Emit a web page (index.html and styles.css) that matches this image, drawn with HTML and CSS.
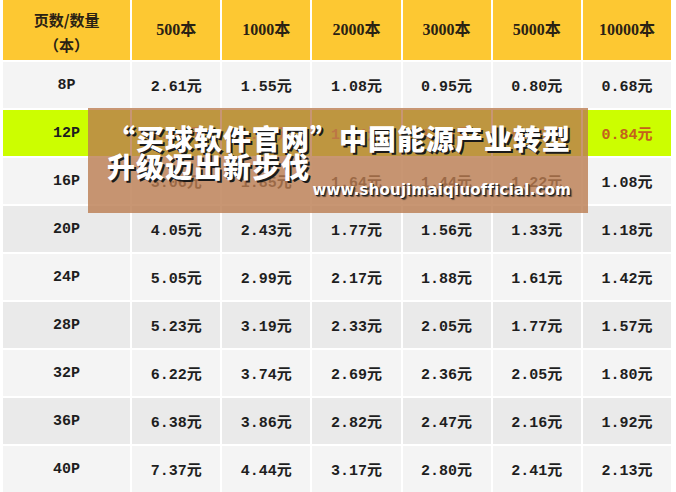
FILE: index.html
```html
<!DOCTYPE html>
<html lang="zh-CN">
<head>
<meta charset="utf-8">
<title>价格表</title>
<link rel="stylesheet" href="styles.css">
</head>
<body>
<div class="page">
  <table class="price">
    <colgroup>
      <col class="c-first">
      <col class="c-num"><col class="c-num"><col class="c-num">
      <col class="c-num"><col class="c-num"><col class="c-num">
    </colgroup>
    <thead>
      <tr>
        <th class="h-first">页数/数量<br>（本）</th>
        <th>500本</th><th>1000本</th><th>2000本</th><th>3000本</th><th>5000本</th><th>10000本</th>
      </tr>
    </thead>
    <tbody>
      <tr class="light"><td>8P</td><td>2.61元</td><td>1.55元</td><td>1.08元</td><td>0.95元</td><td>0.80元</td><td>0.68元</td></tr>
      <tr class="hl"><td class="label">12P</td><td>1.98元</td><td>1.20元</td><td>1.04元</td><td>1.01元</td><td>0.95元</td><td>0.84元</td></tr>
      <tr class="light"><td>16P</td><td>3.06元</td><td>1.85元</td><td>1.64元</td><td>1.44元</td><td>1.22元</td><td>1.08元</td></tr>
      <tr class="dark"><td>20P</td><td>4.05元</td><td>2.43元</td><td>1.77元</td><td>1.56元</td><td>1.33元</td><td>1.18元</td></tr>
      <tr class="light"><td>24P</td><td>5.05元</td><td>2.99元</td><td>2.17元</td><td>1.88元</td><td>1.61元</td><td>1.42元</td></tr>
      <tr class="dark"><td>28P</td><td>5.23元</td><td>3.19元</td><td>2.33元</td><td>2.05元</td><td>1.77元</td><td>1.57元</td></tr>
      <tr class="light"><td>32P</td><td>6.22元</td><td>3.74元</td><td>2.69元</td><td>2.36元</td><td>2.05元</td><td>1.80元</td></tr>
      <tr class="dark"><td>36P</td><td>6.38元</td><td>3.86元</td><td>2.82元</td><td>2.47元</td><td>2.16元</td><td>1.92元</td></tr>
      <tr class="light"><td>40P</td><td>7.37元</td><td>4.44元</td><td>3.17元</td><td>2.80元</td><td>2.41元</td><td>2.13元</td></tr>
    </tbody>
  </table>
  <div class="banner">
    <div class="b-title">“买球软件官网”中国能源产业转型<br>升级迈出新步伐</div>
    <div class="b-url">www.shoujimaiqiuofficial.com</div>
  </div>
</div>
</body>
</html>
```

FILE: styles.css
```css
html, body {
  margin: 0;
  padding: 0;
  background: #ffffff;
}

.page {
  position: relative;
  width: 676px;
  height: 492px;
  overflow: hidden;
}

.price {
  border-collapse: separate;
  border-spacing: 2px;
  table-layout: fixed;
  width: 672px;
  margin: -2px 0 0 1px;
  background: #ffffff;
}

.c-first { width: 127px; }
.c-num { width: 88px; }

.price th {
  height: 57px;
  padding: 0;
  background: #fdc832;
  color: #2a2214;
  font-family: "Liberation Serif", "Noto Sans CJK SC", serif;
  font-weight: 700;
  font-size: 16px;
  line-height: 22px;
  text-align: center;
  vertical-align: middle;
}

.price th.h-first {
  font-family: "Noto Sans CJK SC", sans-serif;
  font-size: 15px;
  line-height: 25px;
  padding-top: 3px;
}

.price td {
  height: 46px;
  padding: 0;
  text-align: center;
  vertical-align: middle;
  color: #1e1e1e;
  font-family: "Liberation Mono", "Noto Sans CJK SC", monospace;
  font-weight: 700;
  font-size: 15px;
}

.light td { background: #f4f4f4; }
.dark td { background: #eaeaea; }
.hl td {
  background: #ccfe00;
  color: #c4601c;
}
.price .hl td.label { color: #1e1e1e; }

.banner {
  position: absolute;
  left: 88px;
  top: 108px;
  width: 500px;
  height: 105px;
  box-sizing: border-box;
  padding: 16px 17px 0 19px;
  background: rgba(186, 124, 80, 0.8);
}

.b-title {
  font-family: "Noto Sans CJK SC", sans-serif;
  font-weight: 900;
  font-size: 28px;
  line-height: 28px;
  color: #ffffff;
  letter-spacing: 1px;
  text-shadow: 2px 2px 0 #1a1a1a;
  white-space: nowrap;
}

.b-url {
  text-align: right;
  font-family: "DejaVu Sans", sans-serif;
  font-weight: 700;
  font-size: 15px;
  line-height: 18px;
  color: #ffffff;
  letter-spacing: 0.2px;
  text-shadow: 1px 1px 0 #222222, 2px 2px 1px rgba(0,0,0,0.5);
  margin-top: 1px;
}
```
